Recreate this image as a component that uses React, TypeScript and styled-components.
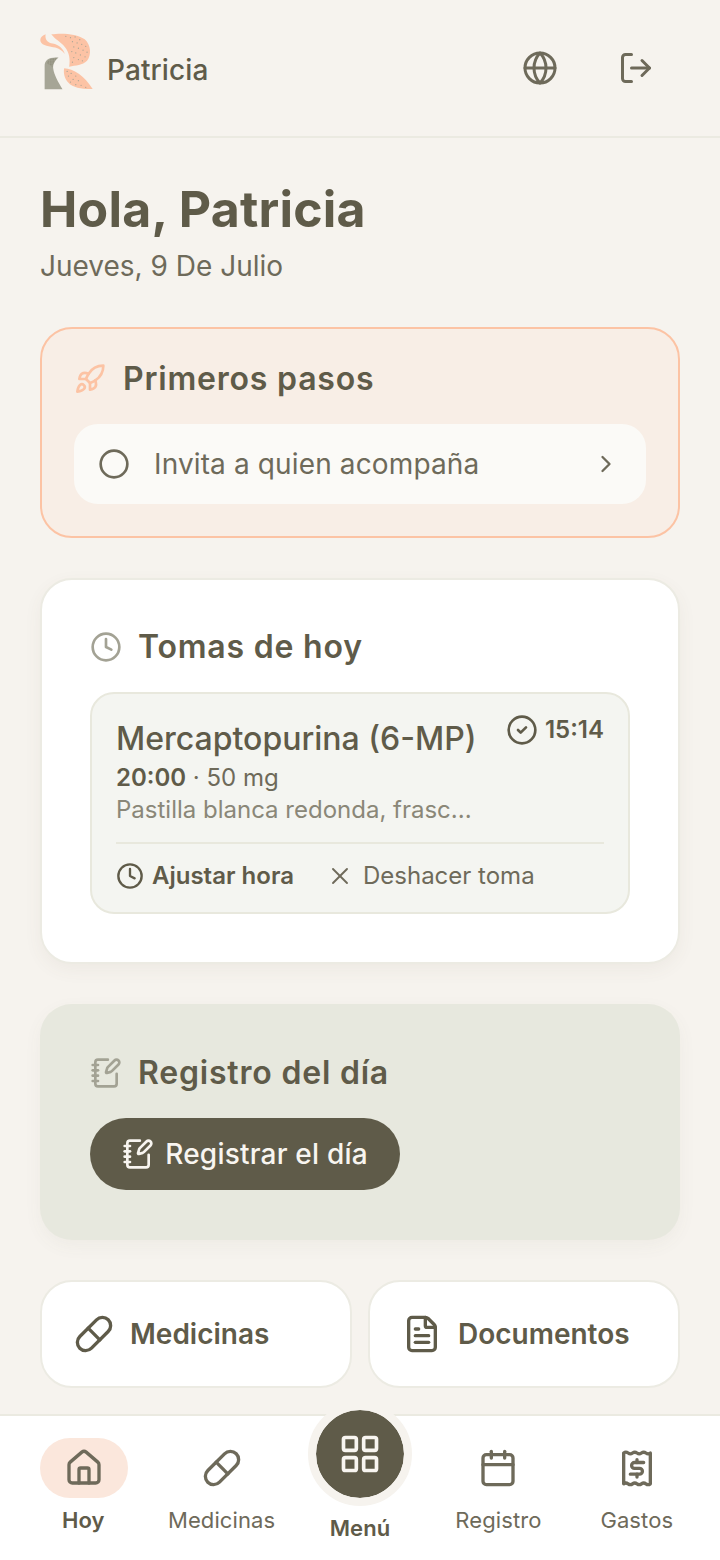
import React from "react";
import styled, { createGlobalStyle } from "styled-components";
import { Globe, LogOut, Rocket, Circle, ChevronRight, Clock, CircleCheck, X, NotebookPen, Pill, FileText, House, LayoutGrid, Calendar } from "lucide-react";

const Global = createGlobalStyle`
  html, body { margin: 0; padding: 0; background: #f6f3ee; }
  body { font-family: Inter, "Liberation Sans", sans-serif; color: #5f5b49; }
  * { box-sizing: border-box; }
`;

const Page = styled.div`
  width: 720px;
  height: 1560px;
  display: flex;
  flex-direction: column;
  overflow: hidden;
  background: #f6f3ee;
`;

const Header = styled.header`
  height: 138px;
  flex: none;
  display: flex;
  align-items: center;
  justify-content: space-between;
  padding: 0 66px 0 40px;
  border-bottom: 2px solid #ebeae1;
`;

const Brand = styled.div`
  display: flex;
  align-items: center;
  gap: 14px;
`;

const LogoMark = styled.svg`
  display: block;
  margin-bottom: 14px;
`;

const BrandName = styled.span`
  font-size: 28px;
  font-weight: 500;
  letter-spacing: 0.1px;
  padding-top: 4px;
`;

const HeaderActions = styled.div`
  display: flex;
  align-items: center;
  gap: 60px;
  color: #6e6a5a;
`;

const Main = styled.main`
  flex: 1;
  min-height: 0;
  padding: 40px 40px 0;
  display: flex;
  flex-direction: column;
`;

const Greeting = styled.h1`
  margin: 0;
  font-size: 50px;
  line-height: 62px;
  font-weight: 700;
  letter-spacing: 0.2px;
`;

const DateLine = styled.p`
  margin: 4px 0 0;
  font-size: 28px;
  line-height: 44px;
  color: #6e6a5a;
`;

const StepsCard = styled.section`
  margin-top: 39px;
  height: 211px;
  padding: 30px 32px 0;
  border: 2px solid #fcc3a4;
  border-radius: 32px;
  background: #f8eee6;
`;

const CardHead = styled.div<{ $gap: number }>`
  display: flex;
  align-items: center;
  gap: ${(p) => p.$gap}px;
  height: 40px;
  color: #a3a294;
`;

const CardTitle = styled.h2`
  margin: 0;
  font-size: 32px;
  line-height: 40px;
  font-weight: 600;
  color: #5f5b49;
  letter-spacing: 0.8px;
`;

const StepRow = styled.div`
  margin-top: 25px;
  height: 80px;
  padding: 0 26px 0 24px;
  display: flex;
  align-items: center;
  gap: 24px;
  border-radius: 24px;
  background: #fbfaf7;
  color: #6e6a5a;
`;

const StepText = styled.span`
  flex: 1;
  font-size: 28px;
  letter-spacing: 0.13px;
`;

const DosesCard = styled.section`
  margin-top: 40px;
  height: 386px;
  padding: 47px 48px 0;
  background: #fff;
  border: 2px solid #ecebe3;
  border-radius: 32px;
  box-shadow: 0 6px 18px rgba(95, 91, 73, 0.06);
`;

const DoseItem = styled.article`
  margin-top: 25px;
  height: 222px;
  padding: 23px 24px 0;
  background: #f4f5f1;
  border: 2px solid #e8e8dd;
  border-radius: 24px;
`;

const DoseTop = styled.div`
  display: flex;
  justify-content: space-between;
  align-items: flex-start;
`;

const DoseName = styled.div`
  font-size: 32px;
  line-height: 44px;
  font-weight: 500;
  color: #5f5b49;
`;

const TakenAt = styled.div`
  display: flex;
  align-items: center;
  gap: 7px;
  margin-top: -3px;
  font-size: 24px;
  font-weight: 600;
  line-height: 32px;
`;

const DoseMeta = styled.div`
  margin-top: -1px;
  font-size: 24px;
  line-height: 36px;
  color: #6e6a5a;
  b { font-weight: 600; color: #5f5b49; }
`;

const DoseNote = styled.div`
  font-size: 24px;
  line-height: 28px;
  color: #8a8778;
`;

const DoseActions = styled.div`
  margin-top: 18px;
  border-top: 2px solid #e8e8dd;
  padding-top: 16px;
  display: flex;
  align-items: center;
  gap: 32px;
`;

const DoseAction = styled.span<{ $strong?: boolean }>`
  display: flex;
  align-items: center;
  gap: ${(p) => (p.$strong ? 8 : 9)}px;
  font-size: 24px;
  line-height: 32px;
  font-weight: ${(p) => (p.$strong ? 600 : 400)};
  color: ${(p) => (p.$strong ? "#5f5b49" : "#6e6a5a")};
`;

const LogCard = styled.section`
  margin-top: 40px;
  height: 236px;
  padding: 49px 50px 0;
  background: #e7e8de;
  border-radius: 32px;
  box-shadow: 0 6px 18px rgba(95, 91, 73, 0.05);
`;

const LogButton = styled.button`
  margin-top: 25px;
  width: 310px;
  height: 72px;
  display: flex;
  align-items: center;
  justify-content: center;
  gap: 11px;
  border: none;
  border-radius: 36px;
  background: #5f5b49;
  color: #f8f5f0;
  font: 500 28px Inter, sans-serif;
  letter-spacing: 0.2px;
`;

const Shortcuts = styled.div`
  margin-top: 40px;
  display: grid;
  grid-template-columns: 1fr 1fr;
  gap: 16px;
`;

const Shortcut = styled.div`
  height: 108px;
  padding: 0 32px;
  display: flex;
  align-items: center;
  gap: 16px;
  background: #fff;
  border: 2px solid #ecebe3;
  border-radius: 32px;
  font-size: 28px;
  font-weight: 600;
`;

const Nav = styled.nav`
  position: relative;
  flex: none;
  height: 146px;
  padding: 0 14px;
  display: grid;
  grid-template-columns: repeat(5, 1fr);
  background: #fff;
  border-top: 2px solid #ebeae1;
`;

const NavItem = styled.div<{ $active?: boolean }>`
  display: flex;
  flex-direction: column;
  align-items: center;
  padding-top: 22px;
  font-size: 22px;
  line-height: 30px;
  letter-spacing: 0.1px;
  font-weight: ${(p) => (p.$active ? 600 : 400)};
  color: ${(p) => (p.$active ? "#5f5b49" : "#6e6a5a")};
`;

const NavIcon = styled.span<{ $active?: boolean }>`
  width: 88px;
  height: 60px;
  margin-bottom: 7px;
  margin-left: ${(p) => (p.$active ? 1 : 0)}px;
  display: flex;
  align-items: center;
  justify-content: center;
  border-radius: 30px;
  background: ${(p) => (p.$active ? "#fbe7dc" : "transparent")};
  color: #6e6a5a;
`;

const MenuItem = styled.div`
  display: flex;
  flex-direction: column;
  align-items: center;
  font-size: 22px;
  line-height: 30px;
  letter-spacing: 0.1px;
  font-weight: 600;
`;

const MenuButton = styled.span`
  width: 104px;
  height: 104px;
  margin-top: -14px;
  margin-bottom: 7px;
  display: flex;
  align-items: center;
  justify-content: center;
  border-radius: 50%;
  background: #5f5b49;
  border: 8px solid #f6f3ee;
  background-clip: padding-box;
  color: #f8f5f0;
`;

const logoDots: [number, number][] = [
  [108, 36], [122, 40], [136, 38], [150, 46], [128, 52], [142, 56], [156, 60], [168, 66],
  [132, 68], [146, 72], [160, 78], [172, 84], [126, 82], [138, 86], [152, 92], [166, 98],
  [132, 100], [146, 106], [158, 110], [128, 114], [112, 142], [124, 148], [138, 156],
  [116, 156], [130, 166], [146, 170], [122, 174], [138, 182], [154, 184], [168, 190],
];

const Logo = () => (
  <LogoMark width="53" height="57" viewBox="30 27 160 170" aria-hidden="true">
    <defs>
      <pattern id="hatch" width="5" height="5" patternUnits="userSpaceOnUse">
        <circle cx="2" cy="2" r="1.6" fill="#77745f" />
      </pattern>
    </defs>
    <path d="M64 30C90 26 140 26 165 45C184 62 186 92 172 110C158 124 138 124 118 128C122 105 118 84 105 68C92 52 76 46 64 30Z" fill="#fcc3a5" />
    <path d="M103 132C130 133 165 155 189 195C160 196 130 192 116 176C104 164 100 146 103 132Z" fill="#fcc3a5" />
    <path d="M47 30C36 34 28 42 32 52C36 64 60 66 76 70C88 73 98 80 105 89C100 74 88 62 68 58C54 55 44 46 47 30Z" fill="#fcc3a5" />
    {logoDots.map(([cx, cy]) => (
      <circle key={`${cx}-${cy}`} cx={cx} cy={cy} r="1.9" fill="#a9a595" />
    ))}
    <path d="M44 196V125C44 108 56 98 86 100C74 110 68 122 70 134C72 152 86 176 98 196Z" fill="#a6a596" />
    <path d="M50 118C54 106 66 101 84 101C74 108 68 118 68 130C60 122 56 120 50 118Z" fill="url(#hatch)" />
  </LogoMark>
);

const ReceiptDollar = () => (
  <svg width="40" height="40" viewBox="0 0 24 24" fill="none" stroke="currentColor" strokeWidth="2" strokeLinecap="round" strokeLinejoin="round" aria-hidden="true">
    <path d="M4 3v18.5q1.3-1 2.67 0t2.67 0 2.66 0 2.67 0 2.66 0 2.67 0V3q-1.33 1-2.67 0t-2.66 0-2.67 0-2.66 0-2.67 0T4 3Z" />
    <path d="M16 8.7h-5.5a1.75 1.75 0 0 0 0 3.5h3a1.75 1.75 0 0 1 0 3.5H8" />
    <path d="M12 7v1.7M12 15.7v1.7" />
  </svg>
);

export default function App() {
  return (
    <Page>
      <Global />
      <Header>
        <Brand>
          <Logo />
          <BrandName>Patricia</BrandName>
        </Brand>
        <HeaderActions>
          <Globe size={36} />
          <LogOut size={36} />
        </HeaderActions>
      </Header>
      <Main>
        <Greeting>Hola, Patricia</Greeting>
        <DateLine>Jueves, 9 De Julio</DateLine>

        <StepsCard>
          <CardHead $gap={17}>
            <Rocket size={32} color="#fcc3a4" />
            <CardTitle>Primeros pasos</CardTitle>
          </CardHead>
          <StepRow>
            <Circle size={32} />
            <StepText>Invita a quien acompaña</StepText>
            <ChevronRight size={28} />
          </StepRow>
        </StepsCard>

        <DosesCard>
          <CardHead $gap={16}>
            <Clock size={32} />
            <CardTitle>Tomas de hoy</CardTitle>
          </CardHead>
          <DoseItem>
            <DoseTop>
              <DoseName>Mercaptopurina (6-MP)</DoseName>
              <TakenAt>
                <CircleCheck size={32} />
                15:14
              </TakenAt>
            </DoseTop>
            <DoseMeta><b>20:00</b> · 50 mg</DoseMeta>
            <DoseNote>Pastilla blanca redonda, frasc...</DoseNote>
            <DoseActions>
              <DoseAction $strong>
                <Clock size={28} />
                Ajustar hora
              </DoseAction>
              <DoseAction>
                <X size={28} strokeWidth={1.6} />
                Deshacer toma
              </DoseAction>
            </DoseActions>
          </DoseItem>
        </DosesCard>

        <LogCard>
          <CardHead $gap={16}>
            <NotebookPen size={32} />
            <CardTitle>Registro del día</CardTitle>
          </CardHead>
          <LogButton>
            <NotebookPen size={32} />
            Registrar el día
          </LogButton>
        </LogCard>

        <Shortcuts>
          <Shortcut>
            <Pill size={40} />
            Medicinas
          </Shortcut>
          <Shortcut>
            <FileText size={40} />
            Documentos
          </Shortcut>
        </Shortcuts>
      </Main>
      <Nav>
        <NavItem $active>
          <NavIcon $active><House size={40} /></NavIcon>
          Hoy
        </NavItem>
        <NavItem>
          <NavIcon><Pill size={40} /></NavIcon>
          Medicinas
        </NavItem>
        <MenuItem>
          <MenuButton><LayoutGrid size={44} /></MenuButton>
          Menú
        </MenuItem>
        <NavItem>
          <NavIcon><Calendar size={40} /></NavIcon>
          Registro
        </NavItem>
        <NavItem>
          <NavIcon><ReceiptDollar /></NavIcon>
          Gastos
        </NavItem>
      </Nav>
    </Page>
  );
}
